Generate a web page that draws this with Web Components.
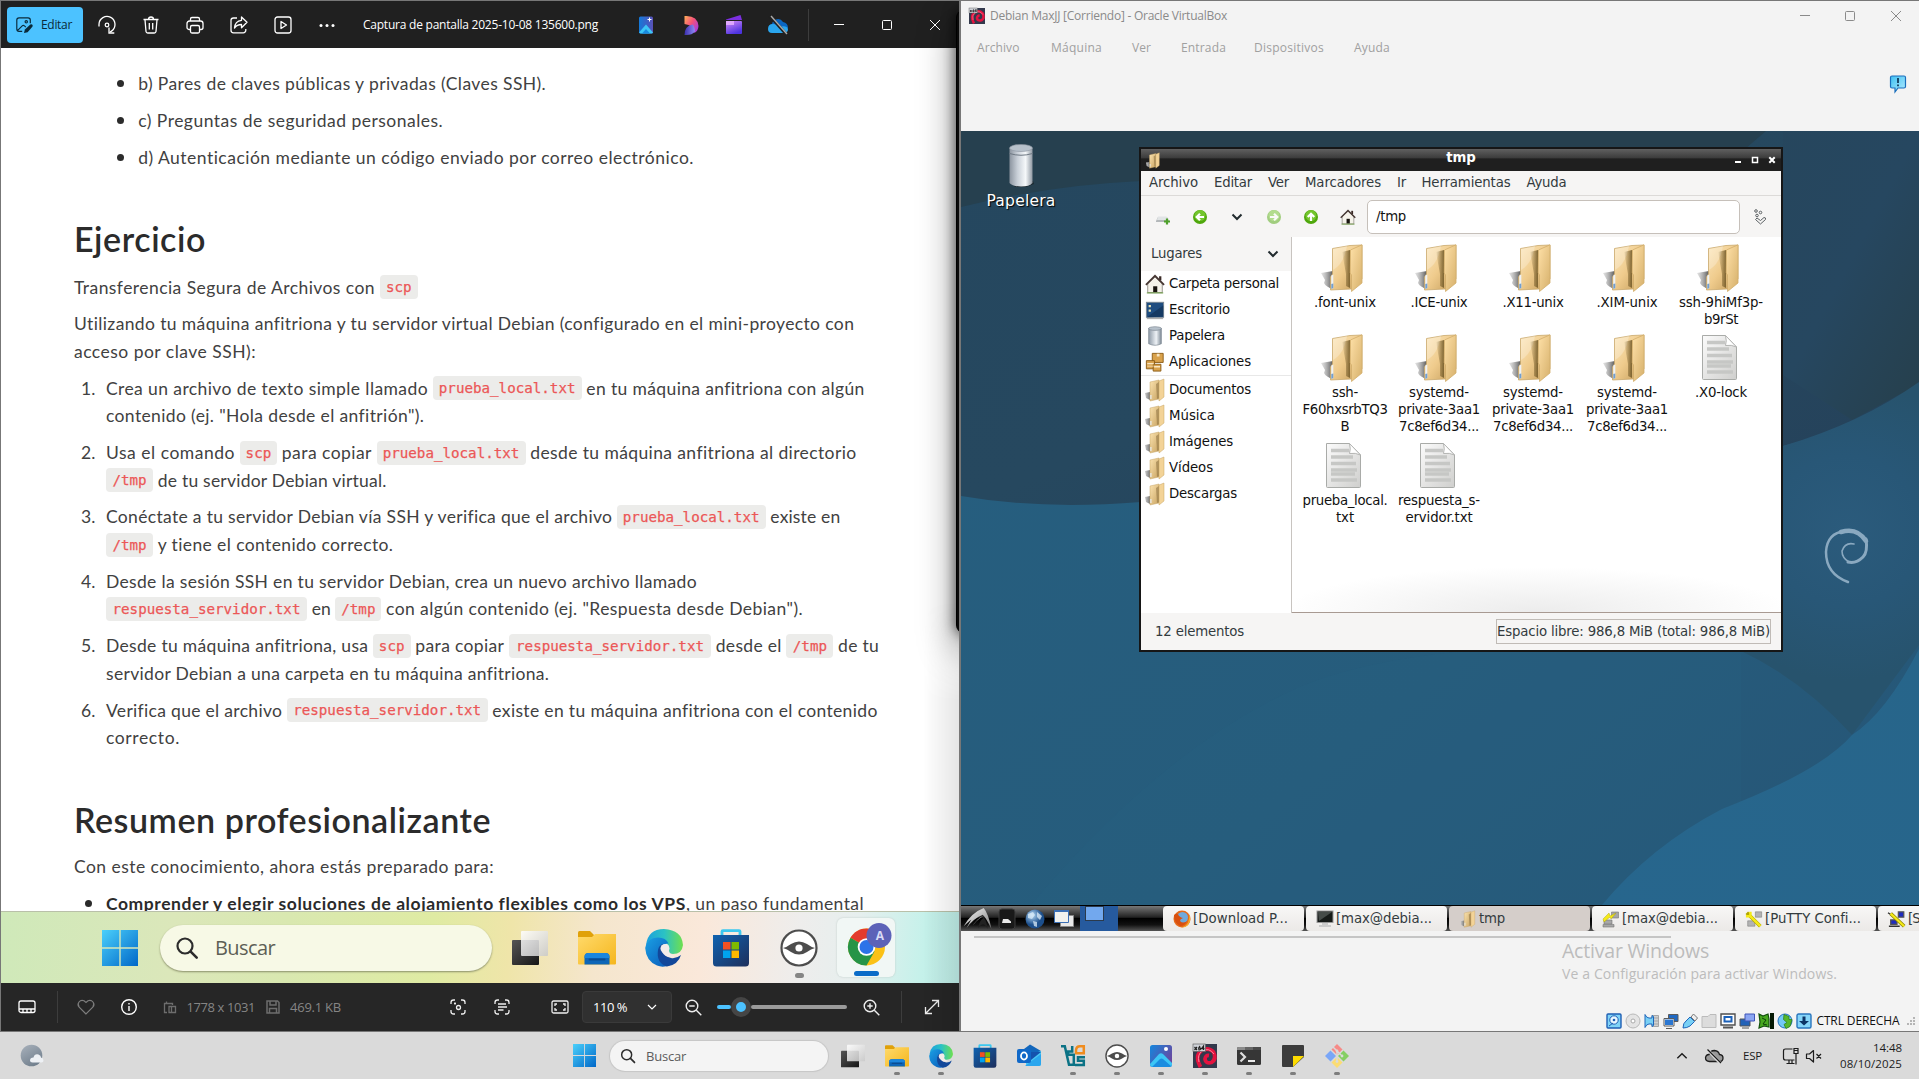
<!DOCTYPE html>
<html lang="es">
<head>
<meta charset="utf-8">
<title>Escritorio</title>
<style>
html,body{margin:0;height:100%;overflow:hidden;background:#dadada;font-family:"Open Sans","Noto Sans",sans-serif}
</style>
</head>
<body>
<desk-top></desk-top>
<script>
const def=(name,html,fn)=>customElements.define(name,class extends HTMLElement{
  constructor(){super();this.attachShadow({mode:'open'});}
  connectedCallback(){if(this.ready)return;this.ready=true;
    const t=document.createElement('template');t.innerHTML=typeof html==='function'?html(this):html;
    this.shadowRoot.append(t.content.cloneNode(true));if(fn)fn(this);}
});

/* A single line of text, tracked so that it fills the width in its "w" attribute */
def('fit-text','<style>:host{display:block;flex:none;white-space:nowrap}span{display:inline-block;white-space:pre}</style><span><slot></slot></span>',el=>{
  const w=+el.getAttribute('w');if(!w)return;
  const s=el.shadowRoot.querySelector('span'),n=el.textContent.length;
  el.style.width=w+'px';
  s.style.letterSpacing=((w-s.getBoundingClientRect().width)/n).toFixed(3)+'px';
});

const winLogo='<defs><linearGradient id="a" x2="1" y2="1"><stop stop-color="#4bd0fb"/><stop offset="1" stop-color="#0067c8"/></linearGradient></defs><path fill="url(#a)" d="M0 0h17.3v17.3H0zM18.7 0H36v17.3H18.7zM0 18.7h17.3V36H0zM18.7 18.7H36V36H18.7z"/>';
const smallFolder='<defs><linearGradient id="a" x2="1" y2="1"><stop stop-color="#fbe3b0"/><stop offset="1" stop-color="#c9a461"/></linearGradient><linearGradient id="s" x2="1"><stop stop-color="#ccc"/><stop offset="1" stop-color="#777"/></linearGradient></defs><path fill="url(#s)" d="M0 15l5-1v8l-4-2z"/><path fill="url(#a)" stroke="#c6a566" stroke-width=".5" d="M5 4l9-2v19l-9 2z"/><path fill="#8b7040" opacity=".55" d="M11 6l3-2v16l-2 1z"/><path fill="#f3d397" stroke="#c6a566" stroke-width=".5" d="M14 3l5-2v18l-5 4z"/><path fill="#e8eef4" d="M5.300 17h1.200v4H5.300z"/>';
const circ=(d,o)=>`<g opacity="${o}"><circle cx="8" cy="8" r="7" fill="#4fa70c"/><circle cx="8" cy="6.500" r="5.500" fill="#73c52c"/><path d="${d}" fill="none" stroke="#fff" stroke-width="2.200"/></g>`;
const ICONS={
 win:['0 0 36 36',winLogo],
 edit:['0 0 20 20','<g fill="none" stroke="#0a2a3a" stroke-width="1.300"><path d="M8 17H4.500A2.500 2.500 0 0 1 2 14.500v-10A2.500 2.500 0 0 1 4.500 2h10A2.500 2.500 0 0 1 17 4.500V8M3 16l5-5q1.200-1 2.500 0l1.500 1.300"/><circle cx="12.500" cy="6.500" r="1.300"/></g><path fill="#0a2a3a" d="M10 19l1-4 6-5.500q1.500-.8 2.300.2t0 2.300L14 18z"/>'],
 rotate:['0 0 20 20','<g fill="none" stroke="#fff" stroke-width="1.300"><path d="M2 11.500V9.500a8 8 0 1 1 12.500 6.600l-1.500 1"/><path d="M12 12.500v5.500h5.300"/><circle cx="10" cy="10" r="1.800"/></g>'],
 trash:['0 0 20 20','<path fill="none" stroke="#fff" stroke-width="1.300" d="M2.500 4.500h15M7.500 4.300Q7.500 2 10 2t2.500 2.300M4 4.700l1 11.800q.2 1.500 1.700 1.500h6.600q1.500 0 1.700-1.500l1-11.800M8.300 8v6.500M11.700 8v6.500"/>'],
 print:['0 0 20 20','<path fill="none" stroke="#fff" stroke-width="1.300" d="M5.500 14.500H4A2 2 0 0 1 2 12.500V8.500A2.500 2.500 0 0 1 4.500 6h11A2.500 2.500 0 0 1 18 8.500v4a2 2 0 0 1-2 2h-1.500M5.500 6V4A1.500 1.500 0 0 1 7 2.500h6A1.500 1.500 0 0 1 14.500 4v2M7 10.500h6a1.500 1.500 0 0 1 1.500 1.500v4.500A1.500 1.500 0 0 1 13 18H7a1.500 1.500 0 0 1-1.500-1.500V12A1.500 1.500 0 0 1 7 10.500z"/>'],
 share:['0 0 20 20','<path fill="none" stroke="#fff" stroke-width="1.300" stroke-linejoin="round" d="M8 3H4.500A2.500 2.500 0 0 0 2 5.500v9.800a2.500 2.500 0 0 0 2.500 2.500h9.800a2.500 2.500 0 0 0 2.500-2.500V14M12.500 2v3.300Q6 6 5.500 13q2.500-3.500 7-3.500v3.300L18 7.300z"/>'],
 play:['0 0 20 20','<g fill="none" stroke="#fff" stroke-width="1.300" stroke-linejoin="round"><rect x="2" y="2" width="16" height="16" rx="2.500"/><path d="M8 6.500v7l5.500-3.500z"/></g>'],
 dots:['0 0 20 20','<g fill="#fff"><circle cx="4" cy="10.500" r="1.500"/><circle cx="10" cy="10.500" r="1.500"/><circle cx="16" cy="10.500" r="1.500"/></g>'],
 pinkphoto:['0 0 20 20','<defs><linearGradient id="a" x2="1"><stop stop-color="#1479d8"/><stop offset="1" stop-color="#5a51b8"/></linearGradient></defs><rect x="3" y="1.500" width="14" height="17" rx="1.500" fill="url(#a)"/><path fill="#3cc6f6" d="M3 17.500l7-8 7 8q-.5 1-1.500 1h-11z"/><path fill="#1889e0" d="M6 18.500l4-4.500 4 4.500z"/><path stroke="#fff" d="M13.500 2.500v4M11.500 4.500h4"/>'],
 designer:['0 0 20 20','<defs><linearGradient id="a" x2="1" y2=".8"><stop stop-color="#ffb057"/><stop offset=".5" stop-color="#f4517a"/><stop offset="1" stop-color="#a03ce8"/></linearGradient><linearGradient id="b" x2="1"><stop stop-color="#3a2fae"/><stop offset="1" stop-color="#8f8af5"/></linearGradient></defs><path fill="url(#a)" d="M3.500 1q13-1 14 10-.3 5-4 7-1-8-10-9z"/><path fill="url(#b)" d="M3.500 20q0-9 8-10.500 2 1 2.500 7-3 4-10.500 3.500z"/>'],
 clip:['0 0 20 20','<defs><linearGradient id="a" y2="1" x2=".5"><stop stop-color="#d78af8"/><stop offset="1" stop-color="#4d34e0"/></linearGradient></defs><path fill="#7c2fe0" d="M2 4.500L16.500 0l1.500 5H2z"/><rect x="2" y="6" width="16" height="13" rx="1" fill="url(#a)"/><path fill="#e7b4ff" opacity=".8" d="M2 6h8v4H2z"/>'],
 cloudoff:['0 0 22 20','<path fill="#0a66c2" d="M5 9a6 6 0 0 1 11-2q5 1 5 6H2q0-3 3-4z"/><path fill="#2aa6ee" d="M1 14q0-5 5-5 4 0 6 3 8-2 9 2 0 4-4 4H5q-4 0-4-4z"/><path stroke="#202020" stroke-width="3" d="M3 1l16 18"/><path stroke="#aaa" stroke-width="1.400" d="M4 1l16 18"/>'],
 min:['0 0 12 12','<path stroke="currentColor" d="M1 5.500h10"/>'],
 max:['0 0 12 12','<rect x="1.500" y="1.500" width="9" height="9" rx="1" fill="none" stroke="currentColor"/>'],
 close:['0 0 12 12','<path stroke="currentColor" d="M1 1l10 10M11 1L1 11"/>'],
 search:['0 0 24 24','<circle cx="10" cy="10" r="7.500" fill="none" stroke="#2c2c2c" stroke-width="2.200"/><path stroke="#2c2c2c" stroke-width="2.600" stroke-linecap="round" d="M15.700 15.700l6 6"/>'],
 taskview:['0 0 36 36','<defs><linearGradient id="a" x2="1" y2="1"><stop stop-color="#fff"/><stop offset="1" stop-color="#c9c9c9"/></linearGradient><linearGradient id="b" x2="1" y2="1"><stop stop-color="#555"/><stop offset="1" stop-color="#161616"/></linearGradient></defs><rect x="0" y="10" width="27" height="25" rx="1" fill="url(#b)"/><rect x="9" y="1" width="27" height="25" rx="1" fill="url(#a)" opacity=".87"/>'],
 folder:['0 0 38 38','<defs><linearGradient id="a" x2="1" y2="1"><stop stop-color="#ffda6b"/><stop offset="1" stop-color="#f5b61d"/></linearGradient></defs><path fill="#e0a10a" d="M0 3.500Q0 2 1.500 2H12l4 4v6H0z"/><path fill="url(#a)" d="M0 8h14l3-3h21v29.500q0 1-1 1H1q-1 0-1-1z"/><path fill="#0d66b8" d="M6.500 35.500V28q0-4 4-4h17q4 0 4 4v7.500z"/><path fill="#1b86dd" d="M6.500 28q0-4 4-4h17q4 0 4 4v1h-25z"/><path stroke="#0a4c92" stroke-width="2" stroke-linecap="round" d="M11.500 30.500h15"/>'],
 edge:['0 0 38 38','<defs><linearGradient id="a" x2="1"><stop stop-color="#1ba0de"/><stop offset=".5" stop-color="#2bc2c4"/><stop offset="1" stop-color="#6fe04e"/></linearGradient><linearGradient id="b" y2="1"><stop stop-color="#1aa0e4"/><stop offset="1" stop-color="#0a59b8"/></linearGradient></defs><path fill="url(#a)" d="M1 16Q3 0 19 0q18 1 19 16-1 9-10 9-6-.5-4-4 1-7-7-8Q6 12 1 16z"/><path fill="url(#b)" d="M.2 19Q2 9 13 8.500q8 0 10.500 6Q19 14 18 19q0 9 7 17Q18 39 12 36.500 1 32 .2 19z"/><path fill="#12479a" d="M13 21q1-5 5-6-2 12 8 14 5 1 10-3-3 10-14 11.500Q11 34 13 21z"/><circle cx="20" cy="19.500" r="4.500" fill="#f3ecea"/><path fill="#f3ecea" d="M17 23q4 7 13 4-5-1-6-5z"/>'],
 store:['0 0 38 38','<defs><linearGradient id="a" y2="1"><stop stop-color="#0f62b0"/><stop offset="1" stop-color="#1e2f5c"/></linearGradient></defs><path fill="none" stroke="#3cc8ef" stroke-width="2.800" d="M10 8V2.500Q10 1.600 11 1.600h16q1 0 1 .9V8"/><path fill="url(#a)" d="M1 6h36v28q0 3.500-3.500 3.500h-29Q1 37.500 1 34z"/><path fill="#f25022" d="M11 13h7.500v7.500H11z"/><path fill="#7fba00" d="M19.500 13H27v7.500h-7.500z"/><path fill="#00a4ef" d="M11 21.500h7.500V29H11z"/><path fill="#ffb900" d="M19.500 21.500H27V29h-7.500z"/>'],
 eye:['0 0 38 38','<circle cx="19" cy="19" r="17.500" fill="#fff" stroke="#4d4d4d" stroke-width="2.200"/><path fill="#4d4d4d" d="M3 19q4-1 8-4 8-5 16 0 4 3 8 4-4 1-8 4-8 5-16 0-4-3-8-4z"/><circle cx="19" cy="19" r="3.600" fill="#fff"/>'],
 chrome:['0 0 50 50','<g transform="translate(2.500 -2)"><circle cx="22" cy="31" r="18.500" fill="#fbc116"/><path fill="#e33b2e" d="M22 31L6 21.700A18.500 18.500 0 0 1 38 21.700z"/><path fill="#269447" d="M22 31l-16-9.300A18.500 18.500 0 0 0 22 49.500l8-14z"/><path fill="#e33b2e" d="M22 22.500h16.500l-3-4-13-5z"/><circle cx="22" cy="31" r="8.800" fill="#fff"/><circle cx="22" cy="31" r="7" fill="#2c73e8"/></g><circle cx="37" cy="17.500" r="12.500" fill="#5c62b8"/>'],
 film:['0 0 20 20','<g fill="none" stroke="#fff" stroke-width="1.300"><rect x="2" y="4" width="16" height="11.500" rx="2"/><path d="M2 12h16M6 12v3.500M10 12v3.500M14 12v3.500"/></g>'],
 heart:['0 0 20 20','<path fill="none" stroke="#7d7d7d" stroke-width="1.200" d="M10 17L3.200 10.200Q1 7.500 3 5t5-1.200l2 1.700 2-1.700Q15 2.500 17 5t-.2 5.200z"/>'],
 info:['0 0 20 20','<g fill="none" stroke="#fff" stroke-width="1.400"><circle cx="10" cy="10" r="7.300"/><path d="M10 9v5M10 6v1.500"/></g>'],
 dims:['0 0 16 16','<g fill="none" stroke="#6d6d6d" stroke-width="1.300"><path d="M5 13.500H2.500v-9h8V6M4.500 4.500V2.500M7 13.500v-6h6.500v6zM9.500 7.500v6"/></g>'],
 save:['0 0 16 16','<path fill="none" stroke="#6d6d6d" stroke-width="1.500" d="M2 2h10.500L14 3.500V14H2zM5 2v4h6V2M4.500 14V9.500h7V14"/>'],
 scan:['0 0 20 20','<g fill="none" stroke="#eee" stroke-width="1.300"><path d="M3 7V5.500Q3 3 5.500 3H7M13 3h1.500Q17 3 17 5.500V7M17 13v1.500q0 2.500-2.500 2.500H13M7 17H5.500Q3 17 3 14.500V13"/><circle cx="10.500" cy="10.500" r="2"/><path d="M6 6.500h2M7 5.500v2"/></g>'],
 scantext:['0 0 20 20','<path fill="none" stroke="#eee" stroke-width="1.300" d="M3 7V5.500Q3 3 5.500 3H7M13 3h1.500Q17 3 17 5.500V7M17 13v1.500q0 2.500-2.500 2.500H13M7 17H5.500Q3 17 3 14.500V13M6 7h8M6 10h9M6 13h5.500"/>'],
 frame:['0 0 20 20','<g fill="none" stroke="#eee" stroke-width="1.300"><rect x="2" y="4" width="16" height="12" rx="1.500"/><path d="M5 9V7h2M13 7h2v2M15 11v2h-2M7 13H5v-2"/></g>'],
 chev:['0 0 12 12','<path fill="none" stroke="currentColor" stroke-width="1.200" d="M2 4l4 4 4-4"/>'],
 chevb:['0 0 12 12','<path fill="none" stroke="#222b2e" stroke-width="2" d="M1.500 3.500L6 8l4.500-4.500"/>'],
 zout:['0 0 20 20','<g fill="none" stroke="#eee" stroke-width="1.400"><circle cx="9" cy="9" r="5.800"/><path d="M13.300 13.300l5 5M6.300 9h5.400"/></g>'],
 zin:['0 0 20 20','<g fill="none" stroke="#eee" stroke-width="1.400"><circle cx="9" cy="9" r="5.800"/><path d="M13.300 13.300l5 5M6.300 9h5.400M9 6.300v5.400"/></g>'],
 expand:['0 0 20 20','<path fill="none" stroke="#eee" stroke-width="1.300" d="M3.500 16.500l13-13M10 3.500h6.500V10M3.500 10v6.500H10"/>'],
 weather:['0 0 24 24','<defs><linearGradient id="a" y2="1" x2=".6"><stop stop-color="#a9b2bc"/><stop offset="1" stop-color="#72808e"/></linearGradient></defs><circle cx="11.500" cy="11.500" r="10.800" fill="url(#a)"/><path fill="#eef1f5" d="M10 16.500q0-3 3.500-3 1-4 5-3 2.500 1 2.500 3 2.500.5 2.500 3 0 2-2 2h-9q-2.500 0-2.500-2z"/>'],
 outlook:['0 0 24 24','<path fill="#1266bb" d="M3 8l10-7.500L24 7v11H8z"/><path fill="#48c6f4" d="M9 12L24 7v13q0 2-2 2H9z"/><path fill="#1452ad" d="M13 8h11l-10 8z"/><path fill="#2aa6ee" d="M8 22l16-12v10q0 2-2 2z"/><rect y="5" width="14" height="14" rx="2" fill="#1068c8"/><ellipse cx="7" cy="12" rx="3" ry="3.600" fill="none" stroke="#fff" stroke-width="1.800"/>'],
 vbox:['0 0 24 24','<g fill="none" stroke="#0b7285" stroke-width="2.500"><path d="M0 2.200h3.800L8 20.800h4.800v-10H7.200V7.500h4V2"/><path d="M24 13.200h-7v3.600h5.800v4.200H14"/><path stroke="#f08c1e" d="M15 9.200V6.500Q15.200 2.300 19 2.300h3.800v6.900H14"/></g>'],
 photos:['0 0 24 24','<defs><linearGradient id="a" x2="1" y2=".6"><stop stop-color="#1387de"/><stop offset="1" stop-color="#6948a0"/></linearGradient></defs><rect x="1" y="1" width="22" height="22" rx="2.500" fill="url(#a)"/><path fill="#3cc6f6" d="M1 20L10 10q2-1.500 4 0l9 9v1.500q0 2.500-2.500 2.500h-17Q1 23 1 20z"/><path fill="#1b8de0" d="M3 23l8-8q1.500-1 3 0l8 7q-.5 1-1.500 1z"/><circle cx="17" cy="5" r="2" fill="#fff"/>'],
 debian:['0 0 24 24','<rect width="24" height="24" fill="#33394c"/><path fill="none" stroke="#e5123f" stroke-width="3.800" d="M7.500 23Q1.500 12 8 7q7-4.500 12.500 1 3.500 7-2 10.500-6 1.500-6.500-3.500.5-4 4-3.500"/><path fill="none" stroke="#ff8ba0" stroke-width=".9" d="M6 18Q4 11 9 7q7-4 12 3"/><rect width="12.500" height="7.500" fill="#cfd2d8" stroke="#555" stroke-width=".6"/><path stroke="#222" stroke-width="1.200" fill="none" d="M1.500 3l2.500 3M4 3L1.500 6M7 2q-2 2-1 4 2 0 1.500-2H6M10.500 6V2L8.500 4.700h3"/>'],
 term:['0 0 24 24','<rect y="3" width="24" height="18" rx="1.500" fill="#363636"/><path fill="#8c8c8c" d="M1.500 3H8v3H0V4.500Q0 3 1.500 3z"/><path fill="#666" d="M8 3h8v3H8z"/><path fill="#4a4a4a" d="M16 3h8v3h-8z"/><path fill="none" stroke="#ddd" stroke-width="2.200" d="M3.500 8.500L8 13l-4.500 4.500"/><path stroke="#fff" stroke-width="1.800" d="M11 17h7"/>'],
 sticky:['0 0 24 24','<path fill="#3c3c3c" d="M2 1h20q1 0 1 1v11L12 23H2q-1 0-1-1V2q0-1 1-1z"/><path fill="#fddb00" d="M12 12h11L12 23z"/>'],
 git:['0 0 24 24','<path fill="#f68a87" d="M12 0l5.500 5.500L12 11 6.500 5.500z"/><path fill="#7aa6f7" d="M5.500 6.500L11 12l-5.500 5.500L0 12z"/><path fill="#85cf63" d="M18.500 6.500L24 12l-5.500 5.500L13 12z"/><path fill="#fbdc74" d="M12 13l5.500 5.500L12 24l-5.500-5.500z"/><path stroke="#dadada" stroke-width="1.500" d="M8 3l8 8M12 7v11"/><circle cx="12" cy="7" r="1.400" fill="#dadada"/><circle cx="12" cy="17.500" r="1.400" fill="#dadada"/><circle cx="17" cy="12" r="1.400" fill="#dadada"/>'],
 cloudx:['0 0 20 16','<path fill="#999" stroke="#1c1c1c" stroke-width="1.300" d="M5.500 13.500q-4 0-4-3.700Q2 6.500 5 6.500q1.500-4 5.500-4 4 .3 5 4 3.500.3 3.500 3.500 0 3.500-3.500 3.500z"/><path stroke="#dadada" stroke-width="3" d="M3 1l13 14"/><path stroke="#1c1c1c" stroke-width="1.300" d="M3.500 1.500L17 15"/>'],
 net:['0 0 18 18','<path fill="none" stroke="#1c1c1c" stroke-width="1.200" d="M10.500 2H3.500Q1.500 2 1.500 4v7q0 2 2 2h9M4.500 16.500h8M7 13v3.500M10 16.500V13M12 1.500h4v5h-4zM14 6.500v11M12.500 3.500h3"/>'],
 mute:['0 0 18 14','<path fill="none" stroke="#1c1c1c" stroke-width="1.200" stroke-linejoin="round" d="M1.500 5v4.500h3l4 3.500V1.500L4.500 5zM11.500 5l4.500 4.500M16 5l-4.500 4.500"/>'],
 note:['0 0 18 18','<defs><linearGradient id="a" x2="1" y2="1"><stop stop-color="#3ec0f2"/><stop offset="1" stop-color="#b4ecff"/></linearGradient></defs><path fill="url(#a)" stroke="#1b6fbd" stroke-width="1.200" d="M3 1h12q1.500 0 1.500 1.500v9Q16.500 13 15 13H9l-3 4v-4H3q-1.500 0-1.500-1.500v-9Q1.500 1 3 1z"/><path stroke="#123a5c" stroke-width="1.800" d="M9 3v5M9 9.500v1.700"/>'],
 bin:['0 0 24 44','<defs><linearGradient id="a" x2="1"><stop stop-color="#8b949f"/><stop offset=".35" stop-color="#c9d0d8"/><stop offset=".7" stop-color="#f5f8fa"/><stop offset="1" stop-color="#8f98a2"/></linearGradient></defs><path fill="#111" opacity=".5" d="M2 37h22l1 3-8 3H6z"/><path fill="url(#a)" d="M.5 4v35q3 3.500 11.500 3.500T23.500 39V4z"/><path fill="none" stroke="#6e7883" d="M.5 9.500Q12 13 23.500 9.500"/><ellipse cx="12" cy="4" rx="11.500" ry="3.500" fill="#b7c1cb" stroke="#8b949f" stroke-width=".6"/>'],
 bigfolder:['0 0 48 48','<defs><linearGradient id="a" x2="1" y2="1"><stop stop-color="#fde8bd"/><stop offset=".5" stop-color="#efcb8c"/><stop offset="1" stop-color="#c19a58"/></linearGradient><linearGradient id="b" y2="1"><stop stop-color="#ffe1a8"/><stop offset="1" stop-color="#d6b06b"/></linearGradient><linearGradient id="s" x2="1"><stop stop-color="#bbb" stop-opacity=".4"/><stop offset="1" stop-color="#555"/></linearGradient><linearGradient id="d" x2="1"><stop stop-color="#6d5524" stop-opacity="0"/><stop offset="1" stop-color="#6d5524" stop-opacity=".85"/></linearGradient></defs><path fill="url(#s)" d="M0 29l12-2v18q-7-2-9-6l1-3z"/><path fill="url(#a)" stroke="#c9a86c" stroke-width=".8" d="M11.500 4.500L29 1.500 41 1v34L30 45l-20.500 1V33l2-3z"/><path fill="#fff" opacity=".25" d="M12 5l14-3q-3 18-14 24z"/><path fill="url(#d)" d="M21 8l8-2v38l-4-2V30z"/><path fill="url(#b)" stroke="#d2ad6b" stroke-width=".8" d="M29.500 6L41 .8V39l-10.500 8.500V31l-1.300-2z"/><path fill="#eef2f6" d="M10.300 31.500l2-1V44l-2 1z"/><path fill="#729fcf" d="M10.300 40l2-.5V44l-2 1z"/>'],
 doc:['0 0 48 48','<defs><linearGradient id="a" y2="1"><stop stop-color="#fbfbfb"/><stop offset="1" stop-color="#cfcfcd"/></linearGradient></defs><path fill="url(#a)" stroke="#a9aba8" d="M5.500 1.500h23L39.500 13v31.500q0 1-1 1h-32q-1 0-1-1z"/><g stroke="#c6c7c5" stroke-width="3.600"><path d="M10 8.500h18M10 15h22M10 21.500h25M10 28h26M10 32h24M10 38h26"/></g><path fill="#fff" stroke="#b4b5b3" d="M28.500 1.500Q30 7 28.500 11.500q6-1 11 1.500z"/>'],
 sf:['0 0 20 24',smallFolder],
 house:['0 0 22 22','<path fill="#3b2a26" d="M15.500 2.500h2.500V7h-2.500z"/><path fill="#f5f2ea" stroke="#77736b" stroke-width=".8" d="M3 10.500L11 3l8 7.500V20.500H3z"/><path fill="none" stroke="#463733" stroke-width="2" d="M1 12L11 2l10 10"/><path fill="#18130f" d="M9 13.500h4.500V20H9z"/><path stroke="#6e9c47" stroke-width="1.200" d="M2 20.800h18"/>'],
 desk:['0 0 22 22','<rect x="1.500" y="2.500" width="19" height="16.500" fill="#1f4d80" stroke="#7c8791"/><path fill="#163a63" d="M2 19L20 6v12.500z"/><path fill="#e9e3b8" d="M4 5.500h2.500V8H4zM4 10.500h2.500V13H4z"/><path stroke="#999" d="M2 20.500h18"/>'],
 sbin:['0 0 22 22','<defs><linearGradient id="a" x2="1"><stop stop-color="#8d99a6"/><stop offset=".6" stop-color="#eef2f6"/><stop offset="1" stop-color="#7e8a96"/></linearGradient></defs><path fill="url(#a)" stroke="#76828d" stroke-width=".7" d="M4 2.500v17q7 3.500 14 0v-17z"/><ellipse cx="11" cy="2.800" rx="7" ry="2" fill="#b7c1cb" stroke="#76828d" stroke-width=".7"/>'],
 apps:['0 0 22 22','<g fill="#d9a24c" stroke="#8a5a14"><path d="M8 1.500h12v10H8z"/><path d="M1.500 9.500h9v9h-9z"/><path d="M9 13.500h8.500v7.500H9z"/></g><path fill="#f8e6c4" d="M13 2h3v3h-3zM2.500 12h7v1.500h-7zM10 15.500h6.500V17H10zM2.500 15h7v1h-7z"/>'],
 newtab:['0 0 16 16','<path fill="#b4b8ba" d="M1 12l2-4h9l2 4-1 1H1z"/><path fill="#e1e4e5" d="M3 7.500h8.500L13 11H2z"/><path stroke="#4ea02a" stroke-width="2.200" d="M12 9.500v6M9 12.500h6"/>'],
 back:['0 0 16 16',circ('M12 8H5M8 4.700L4.700 8 8 11.300',1)],
 fwd:['0 0 16 16',circ('M4 8h7M8 4.700L11.300 8 8 11.300',.5)],
 up:['0 0 16 16',circ('M8 12V5M4.700 8L8 4.700 11.300 8',1)],
 more:['0 0 16 18','<g fill="none" stroke="#5c6164"><circle cx="4" cy="3" r="1.300"/><circle cx="8.500" cy="4.500" r="1.300"/><circle cx="5" cy="7.500" r="1.300"/><path d="M3.500 11.500l5 4.500 5-4.500V10l-1.500-.5-3.500 3-3.500-2.500z"/></g>'],
 lxde:['0 0 30 24','<defs><linearGradient id="a" y2="1"><stop stop-color="#fff"/><stop offset="1" stop-color="#777"/></linearGradient></defs><path fill="url(#a)" d="M0 20Q8 6 21 1q5 6 8 22Q24 12 20 8 10 12 3 22l5-9zM8 22Q12 14 21 9q-8 3-13 13z"/><path fill="#222" d="M15 22q1-7 6-11 3 3 4 12-4-9-10-1z"/>'],
 fm:['0 0 18 22','<rect x="1" y="1" width="16" height="20" rx="3" fill="#191919" stroke="#3c3c3c"/><path fill="#e9e9e9" d="M4 15l1-4h5l3 2.500V15z"/>'],
 globe:['0 0 20 20','<defs><radialGradient id="a" cx=".35" cy=".3"><stop stop-color="#b8dcf8"/><stop offset="1" stop-color="#1c4f8c"/></radialGradient></defs><circle cx="10" cy="10" r="9.500" fill="url(#a)"/><path fill="#dcecf8" opacity=".75" d="M3 5l5-2 2 3-3 4-4-1zM12 3l5 4-2 4-3-3zM8 12l4 1v5l-3-1z"/>'],
 iconify:['0 0 22 20','<path fill="#e8e8e8" stroke="#888" d="M7.500 6.500h13v11h-13z"/><path fill="#f1f1ee" stroke="#3b6fb5" d="M1.500 1.500h14v12h-14z"/><path stroke="#3b6fb5" stroke-width="2" d="M1 2h15"/>'],
 firefox:['0 0 18 18','<circle cx="9" cy="9" r="8.500" fill="#e66a1b"/><circle cx="9.500" cy="7.500" r="5.500" fill="#6fa9dc"/><path fill="#d9500f" d="M1 5q2-2 4-1 1 3 5 4-3 1-3 3 3 3 7 0-2 5-7 5-6-3-6-11z"/><path fill="#f5ad2c" d="M16 4q3 6-1 11-3 3-7 2.500 5-1 7-5 2-4 1-8.500z"/>'],
 monitor:['0 0 18 18','<rect x="1" y="1" width="16" height="11.500" fill="#161a18" stroke="#999"/><path fill="#454b48" d="M2 2h14L3 11z"/><path fill="#ccc" d="M6 13h6v2h3v2H3v-2h3z"/>'],
 putty:['0 0 18 18','<g fill="#a7a7a7" stroke="#777" stroke-width=".6"><path d="M9.500 2h7v6h-7z"/><path d="M2 10h8v4H2zM1 14.500h11V17H1z"/></g><path fill="#f5ea18" stroke="#a59a00" stroke-width=".4" d="M1 9l6-6 1 3 6-3-5 6-1-2-6 5z"/>'],
 puttyc:['0 0 20 18','<g fill="#b3b3b3" stroke="#777" stroke-width=".6"><path d="M11.500 1h7v6h-7z"/><path d="M3 11h8v6H3z"/></g><path fill="none" stroke="#b3a700" stroke-width="4" d="M2 2l5 5 10 10"/><path fill="none" stroke="#f5ea18" stroke-width="2.800" d="M1 6h5V1M5 5l12 12"/>'],
 puttys:['0 0 20 18','<g fill="#1e2bc0" stroke="#555" stroke-width="1.400"><path d="M11.500 1h6v6h-6z"/><path d="M3 10h7v5H3z"/></g><path stroke="#333" stroke-width="1.500" d="M1 17h12M0 2l9 6"/><path stroke="#8b8200" stroke-width="4" d="M3 3l15 14"/><path stroke="#f5ea18" stroke-width="2.400" d="M3 3l15 14"/>'],
 v0:['0 0 16 16','<rect x="1" y="1" width="14" height="14" rx="1" fill="#7fd3f7" stroke="#1f5fb4" stroke-width="1.400"/><circle cx="8" cy="7" r="4.200" fill="#e9f7ff" stroke="#1f5fb4"/><circle cx="8" cy="7" r="1.300" fill="#1f5fb4"/><path stroke="#1f5fb4" d="M3 13l4-3"/>'],
 v1:['0 0 16 16','<circle cx="8" cy="8" r="7" fill="#e4e4e4" stroke="#b9b9b9"/><circle cx="8" cy="8" r="2" fill="#fff" stroke="#aaa"/>'],
 v2:['0 0 16 16','<path fill="#d0d0d0" stroke="#a5a5a5" d="M8 2.500h6.500v11H8z"/><path stroke="#a5a5a5" d="M10 5h4M10 8h4M10 11h4"/><path fill="#79d0f5" stroke="#1e66bb" d="M1 1.500q1.500 3.500 4 3.500h3V2.500l1.500 1v9l-1.500 1V11H5q-2.500 0-4 3.500z"/>'],
 v3:['0 0 16 16','<path fill="#1f68c2" stroke="#5b5b5b" d="M5.500 1.500h9.500v7H5.500z"/><path fill="#2b77d2" stroke="#fff" d="M1.500 6h9v6.500h-9z"/><path fill="none" stroke="#5b5b5b" d="M1 5.500h10V13H1zM3 15.500h6"/>'],
 v4:['0 0 16 16','<path fill="#79d0f5" stroke="#1e66bb" d="M1 15q0-5 3-7l4-4 4.500 4.500L8 13q-3 2-7 2z"/><path fill="#eee" stroke="#777" d="M9 4l2.500-3L15.500 5 13 8z"/>'],
 v5:['0 0 16 16','<path fill="#dcdcdc" stroke="#bbb" d="M1 3.500h6l2-2h6v13H1z"/>'],
 v6:['0 0 16 16','<path fill="#fff" stroke="#4f4f4f" stroke-width="1.400" d="M1 1h14v11H1z"/><path fill="#fff" stroke="#1d62ba" stroke-width="2" d="M4.500 4h7v4.500h-7z"/><path stroke="#555" stroke-width="2" d="M3 14.500h10"/>'],
 v7:['0 0 16 16','<path fill="#2262b7" stroke="#555" d="M1 6h10v7H1z"/><path fill="#8aa5f2" stroke="#3f55b8" d="M6 1h9.500v7H6z"/><path stroke="#555" d="M3 15h7"/>'],
 v8:['0 0 16 16','<path fill="#47a81f" stroke="#12500c" stroke-width="1.200" d="M1 1l4 2 5-2 1 5v8l-5-1-5 2 1-6z"/><path fill="none" stroke="#0c3f08" d="M4 5l4 2-3 4 4 1"/><path fill="#061a04" d="M12 0h4v16h-4z"/>'],
 v9:['0 0 16 16','<circle cx="8" cy="8" r="7" fill="#73c9f4" stroke="#2172bd"/><path fill="#55b72c" stroke="#2b7d12" stroke-width=".7" d="M7 1.500l5 2v3h3l-2 7-4 2-2-4 3-2-3.500-3z"/>'],
 v10:['0 0 16 16','<rect x="1" y="1" width="14" height="14" rx="1.500" fill="#86d6fa" stroke="#2a75bd" stroke-width="1.400"/><path fill="#0d3566" d="M6.500 3.500h3V8H13l-5 4.500L3 8h3.500z"/>'],
 grip:['0 0 10 10','<g fill="#b5b5b5"><path d="M7 1h2v2H7zM4 4h2v2H4zM7 4h2v2H7zM1 7h2v2H1zM4 7h2v2H4zM7 7h2v2H7z"/></g>'],
 fmin:['0 0 8 8','<path stroke="#fff" stroke-width="2" d="M1 6h6"/>'],
 fmax:['0 0 8 8','<path stroke="#fff" stroke-width="1.500" fill="none" d="M1.500 1.500h5v5h-5z"/>'],
 fclose:['0 0 8 8','<path stroke="#fff" stroke-width="2" d="M1.300 1.300l5.400 5.400M6.700 1.300L1.300 6.700"/>']
};
def('i-con',el=>{const [vb,b]=ICONS[el.getAttribute('n')],w=el.getAttribute('w')||20,h=el.getAttribute('h')||w;
 return `<style>:host{display:block;flex:none;width:${w}px;height:${h}px}svg{display:block;overflow:visible}</style><svg width="${w}" height="${h}" viewBox="${vb}">${b}</svg>`});
const ic=(n,w,ml=0,h='')=>`<i-con n="${n}" w="${w}" ${h?`h="${h}"`:''} style="margin-left:${ml}px"></i-con>`;
const tx=(s,w,ml=0,st='')=>`<fit-text w="${w}" style="margin-left:${ml}px;${st}">${s}</fit-text>`;

/* Inline code */
def('code-chip','<style>:host{display:flex;flex:none;align-items:center;justify-content:center;height:24px;border-radius:4px;background:#ececea;color:#eb5757;font:14.2px/24px "DejaVu Sans Mono",monospace;-webkit-text-stroke:.25px #eb5757;white-space:nowrap}</style><slot></slot>',el=>{el.style.width=el.getAttribute('w')+'px'});
const cc=(s,w)=>`<code-chip w="${w}">${s}</code-chip>`;
/* One document line: marker, then text runs and chips */
def('doc-line','<style>:host{display:flex;align-items:center;height:27.500px;gap:4.700px}</style><slot></slot>');
const ln=(x,mt,c,st='')=>`<doc-line style="padding-left:${x-1}px;margin-top:${mt}px;${st}">${c}</doc-line>`;
const li=(n,mt,c)=>ln(81,mt,`<span style="flex:none;width:20.300px">${n}.</span>`+c);
const bul='<span style="flex:none;width:7px;height:7px;border-radius:50%;background:#2b2b2b;margin-right:10px"></span>';

def('doc-page',`<style>:host{display:block;height:863px;overflow:hidden;background:#fff;color:#414141;font:400 17.500px/27.500px Lato,sans-serif}
h2{margin:0;padding-left:73px;display:flex;height:44px;line-height:44px;font-size:34px;font-weight:600;color:#2b2b2b}b{color:#2b2b2b}</style>
${ln(116.5,22,bul+tx('b) Pares de claves públicas y privadas (Claves SSH).',408))}
${ln(116.5,9.4,bul+tx('c) Preguntas de seguridad personales.',305))}
${ln(116.5,9.4,bul+tx('d) Autenticación mediante un código enviado por correo electrónico.',556))}
<h2 style="margin-top:46px">${tx('Ejercicio',132)}</h2>
${ln(74,12.4,tx('Transferencia Segura de Archivos con',301)+cc('scp',38))}
${ln(74,9,tx('Utilizando tu máquina anfitriona y tu servidor virtual Debian (configurado en el mini-proyecto con',780))}
${ln(74,0.2,tx('acceso por clave SSH):',182))}
${li(1,9.3,tx('Crea un archivo de texto simple llamado',322)+cc('prueba_local.txt',149)+tx('en tu máquina anfitriona con algún',278))}
${ln(106,0,tx('contenido (ej. "Hola desde el anfitrión").',318))}
${li(2,9.4,tx('Usa el comando',129)+cc('scp',37.5)+tx('para copiar',90)+cc('prueba_local.txt',149)+tx('desde tu máquina anfitriona al directorio',326))}
${ln(106,0,cc('/tmp',47)+tx('de tu servidor Debian virtual.',229))}
${li(3,9.4,tx('Conéctate a tu servidor Debian vía SSH y verifica que el archivo',506)+cc('prueba_local.txt',149)+tx('existe en',70))}
${ln(106,0,cc('/tmp',47)+tx('y tiene el contenido correcto.',236))}
${li(4,9.4,tx('Desde la sesión SSH en tu servidor Debian, crea un nuevo archivo llamado',591))}
${ln(106,0,cc('respuesta_servidor.txt',201)+tx('en',19)+cc('/tmp',46)+tx('con algún contenido (ej. "Respuesta desde Debian").',417))}
${li(5,9.4,tx('Desde tu máquina anfitriona, usa',262)+cc('scp',38)+tx('para copiar',89)+cc('respuesta_servidor.txt',202)+tx('desde el',66)+cc('/tmp',47)+tx('de tu',41))}
${ln(106,0,tx('servidor Debian a una carpeta en tu máquina anfitriona.',443))}
${li(6,9.4,tx('Verifica que el archivo',176)+cc('respuesta_servidor.txt',201)+tx('existe en tu máquina anfitriona con el contenido',385))}
${ln(106,0,tx('correcto.',74))}
<h2 style="margin-top:46px">${tx('Resumen profesionalizante',417)}</h2>
${ln(74,11.500,tx('Con este conocimiento, ahora estás preparado para:',420))}
${ln(85,9.3,bul.replace('10px','9.3px')+`<b>${tx('Comprender y elegir soluciones de alojamiento flexibles como los VPS',580)}</b>`+tx(', un paso fundamental',178,-4.7))}`);

def('photo-strip',`<style>:host{display:flex;align-items:center;height:72px;box-sizing:border-box;border-top:1px solid #b9c0a9;background:linear-gradient(95deg,#cfe9b9 0,#dbe7ba 18%,#d9e8b0 30%,#dfeba3 45%,#efe5a9 53%,#f5e6cd 62%,#fae8da 73%,#eeedec 83%,#e6efee 89%,#c5f1ea 96%,#c0efe9)}
.s{display:flex;align-items:center;width:332px;height:46px;border-radius:23px;background:#f7f9e6;box-shadow:0 1px 2px #8a8f6a;margin-left:22px;flex:none}
.c{width:58px;height:59px;border-radius:6px;background:#f1f7f5;margin-left:19px;display:flex;flex-direction:column;align-items:center;position:relative;box-shadow:0 0 2px #bcc8c5}
.c i,.e i{display:block;height:5px;border-radius:3px}.c b{position:absolute;left:35px;top:9px;width:16px;text-align:center;font:bold 12px/17px "Open Sans",sans-serif;color:#d9dbf5}
.e{display:flex;flex-direction:column;align-items:center;gap:6px;padding-top:11px}</style>
${ic('win',36,101)}<div class="s">${ic('search',24,15)}${tx('Buscar',60,16,'font:20px/30px Open Sans,sans-serif;color:#5d5f55')}</div>
${ic('taskview',36,20)}${ic('folder',38,30)}${ic('edge',38,29)}${ic('store',38,29)}<div class="e" style="margin-left:30px">${ic('eye',38)}<i style="width:9px;background:#858585"></i></div>
<div class="c">${ic('chrome',50,2)}<b>A</b><i style="width:25px;background:#0a6cc8;margin-top:3px"></i></div>`);

const sep=(m=20)=>`<span style="flex:none;width:1px;height:32px;background:#3d3d3d;margin-left:${m}px"></span>`;
def('photo-viewer',`<style>:host{display:block;position:relative;overflow:hidden;width:961px;height:1032px;box-sizing:border-box;border:1px solid #777;border-right:2px solid #777;background:#202020}
.t,.b{display:flex;align-items:center;height:47px;color:#fff;font-size:12px}.b{height:48px;background:#262626}
.ed{display:flex;align-items:center;width:76px;height:36px;border-radius:4px;background:#4cc2ff;color:#0a2a3a;margin-left:6px;flex:none}
.sel{display:flex;align-items:center;width:88px;height:30px;border:1px solid #3a3a3a;border-radius:4px;background:#303030;margin-left:12px;flex:none}
.sl{display:flex;align-items:center;width:130px;margin-left:14px;flex:none}.sl i{height:4px;border-radius:2px}
.k{flex:none;width:10px;height:10px;border-radius:50%;background:#4cc2ff;border:5px solid #454545}
.sh{position:absolute;left:955px;top:9px;width:60px;height:623px;border-radius:8px;background:#0a0a0a;border-left:1px solid #000;box-shadow:0 0 12px 2px rgba(0,0,0,.5),0 14px 34px 4px rgba(0,0,0,.35)}
.sh2{position:absolute;left:922px;top:600px;width:37px;height:430px;background:linear-gradient(90deg,transparent,rgba(0,0,0,.1));-webkit-mask:linear-gradient(transparent,#000 100px);mask:linear-gradient(transparent,#000 100px)}</style>
<div class="t"><div class="ed">${ic('edit',18,8)}${tx('Editar',31,8)}</div>${ic('rotate',20,14)}${['trash','print','share','play','dots'].map(n=>ic(n,20,24)).join('')}${tx('Captura de pantalla 2025-10-08 135600.png',235,26)}
${ic('pinkphoto',20,38)}${ic('designer',20,25)}${ic('clip',20,23)}${ic('cloudoff',22,23,20)}${sep(19)}${ic('min',12,24)}${ic('max',12,36)}${ic('close',12,36)}</div>
<doc-page></doc-page><photo-strip></photo-strip>
<div class="b">${ic('film',20,16)}${sep()}${ic('heart',20,18)}${ic('info',20,23)}${ic('dims',16,23)}${tx('1778 x 1031',68.5,8.5,'color:#858585;font-size:13px')}${ic('save',16,10)}${tx('469.1 KB',51,9,'color:#858585;font-size:13px')}
${ic('scan',20,107)}${ic('scantext',20,24)}${ic('frame',20,38)}<div class="sel">${tx('110 %',34,10,'font-size:13px')}${ic('chev',12,19)}</div>${ic('zout',20,11)}
<div class="sl"><i style="width:14px;background:#4cc2ff"></i><span class="k"></span><i style="flex:1;background:#9a9a9a"></i></div>${ic('zin',20,14)}${sep()}${ic('expand',20,20)}</div>
<div class="sh2"></div><div class="sh"></div>`);

/* File manager */
def('file-item',el=>`<style>:host{display:flex;flex-direction:column;align-items:center;width:94px;color:#111;font:13.300px/17px "DejaVu Sans",sans-serif}</style>${ic(el.getAttribute('t'),48,0)}<div style="height:2px"></div>${el.getAttribute('l').split('|').map(s=>{const[a,w]=s.split('~');return tx(a,w||0)}).join('')}`);
const fi=(l,t='bigfolder')=>`<file-item t="${t}" l="${l}"></file-item>`;
def('place-row',el=>`<style>:host{display:flex;align-items:center;height:26px;padding-left:4px;color:#111}</style>${ic(el.getAttribute('i'),20,0,el.getAttribute('i')=='sf'?24:20)}${tx(el.getAttribute('l'),el.getAttribute('w'),4)}`);
const pr=(i,l,w)=>`<place-row i="${i}" l="${l}" w="${w}"></place-row>`;
const sysd='systemd-~60|private-3aa1~82|7c8ef6d34...~80';
def('file-manager',`<style>:host{display:block;box-sizing:border-box;width:644px;height:505px;border:2px solid #161616;background:#f6f5f4;font:13.300px/18px "DejaVu Sans",sans-serif;color:#333b3e}
.tt{display:flex;align-items:center;height:22px;background:linear-gradient(#606060,#3c3c3c 40%,#1f1f1f 45%,#1f1f1f)}
.tt b{flex:1;text-align:center;color:#fff;font-size:13.300px;padding-left:28px;padding-bottom:4px}
.m{display:flex;align-items:center;height:24px;border-bottom:1px solid #dcdad8}
.tb{display:flex;align-items:center;height:41px}
.in{box-sizing:border-box;width:373px;height:34px;border:1px solid #c6c0ba;border-radius:5px;background:#fff;color:#111;display:flex;align-items:center;margin-left:11px}
.mid{display:flex;height:376px}.side{width:150px;background:#fff;border-right:1px solid #c8c4c0}
.lg{display:flex;align-items:center;height:34px;background:#f6f5f4}
.ct{flex:1;background:radial-gradient(ellipse 52% 45px at 50% 100%,#ececec,#fff);border-bottom:1px solid #a89a92;padding:7px 0 0 6px;display:grid;grid-template-columns:repeat(5,94px);grid-template-rows:90px 107.500px 100px;box-sizing:border-box}
.st{display:flex;align-items:center;height:37px}.bx{box-sizing:border-box;width:275px;height:25px;border:1px solid #c0bbb6;display:flex;align-items:center;margin-left:252px}</style>
<div class="tt">${ic('sf',14,5,17)}<b>tmp</b>${ic('fmin',8,0)}${ic('fmax',8,9)}${ic('fclose',8,9)}<span style="width:5px"></span></div>
<div class="m">${tx('Archivo',49,8)}${tx('Editar',38,16)}${tx('Ver',21,16)}${tx('Marcadores',76,16)}${tx('Ir',9,16)}${tx('Herramientas',89,15.5)}${tx('Ayuda',40,16)}</div>
<div class="tb">${ic('newtab',16,14)}${ic('back',16,21)}${ic('chevb',12,23)}${ic('fwd',16,23)}${ic('up',16,21)}${ic('house',16,21)}<div class="in">${tx('/tmp',30,8)}</div>${ic('more',16,12,18)}</div>
<div class="mid"><div class="side"><div class="lg">${tx('Lugares',51,10)}${ic('chevb',12,65)}</div>
${pr('house','Carpeta personal',110)}${pr('desk','Escritorio',61)}${pr('sbin','Papelera',56)}${pr('apps','Aplicaciones',82)}<div style="height:1px;background:#e8e8e8;margin:0 0 1px"></div>
${pr('sf','Documentos',82)}${pr('sf','Música',46)}${pr('sf','Imágenes',64)}${pr('sf','Vídeos',44)}${pr('sf','Descargas',68)}</div>
<div class="ct">${fi('.font-unix~62')}${fi('.ICE-unix~57')}${fi('.X11-unix~61')}${fi('.XIM-unix~61')}${fi('ssh-9hiMf3p-~84|b9rSt~34')}
${fi('ssh-~26|F60hxsrbTQ3~85|B')}${fi(sysd)}${fi(sysd)}${fi(sysd)}${fi('.X0-lock~52','doc')}${fi('prueba_local.~85|txt~18','doc')}${fi('respuesta_s-~82|ervidor.txt~67','doc')}</div></div>
<div class="st">${tx('12 elementos',89,14)}<div class="bx">${tx('Espacio libre: 986,8 MiB (total: 986,8 MiB)',273,0)}</div></div>`);

def('task-button',el=>`<style>:host{display:flex;align-items:center;flex:none;box-sizing:border-box;width:141px;height:25px;border-radius:4px;background:${el.hasAttribute('on')?'#d5ceca':'linear-gradient(#f8f7f6,#ebe9e7)'};font:13.300px/18px "DejaVu Sans",sans-serif;color:#333b3e;margin-right:2px}</style>${ic(el.getAttribute('i'),18,10)}${tx(el.getAttribute('l'),el.getAttribute('w'),2)}`);
const tk=(i,l,w,x='')=>`<task-button i="${i}" l="${l}" w="${w}" ${x}></task-button>`;
def('lx-panel',`<style>:host{display:flex;align-items:center;height:26px;box-sizing:border-box;border-top:1px solid #000;background:linear-gradient(#777,#222 45%,#000 50%,#111 75%,#555);overflow:hidden}
.pg{width:38px;height:25px;background:#265a9e;margin-left:5px;flex:none}.pg i{display:block;width:17px;height:13px;margin-left:5px;background:#72a8ee;border:1px solid #2b3a4c}</style>
${ic('lxde',30,2,23)}${ic('fm',18,5,22)}${ic('globe',20,9)}${ic('iconify',22,8,20)}<div class="pg"><i></i></div><span style="width:45px;flex:none"></span>
${tk('firefox','[Download P...',95)}${tk('monitor','[max@debia...',96)}${tk('sf','tmp',26,'on')}${tk('putty','[max@debia...',96)}${tk('puttyc','[PuTTY Confi...',96)}${tk('puttys','[S',12)}`);

def('debian-desktop',`<style>:host{display:block;position:relative;height:774px;overflow:hidden;background:#265c7d}.w{position:absolute;inset:0;display:block}
file-manager{position:absolute;left:178px;top:16px}.p{position:absolute;left:20px;top:13px;width:80px;display:flex;flex-direction:column;align-items:center;gap:3px;color:#fff;font:15.500px/20px "DejaVu Sans",sans-serif;text-shadow:1px 1px 1px #000}</style>
<svg class="w" width="958" height="774" viewBox="0 0 958 774"><defs>
<linearGradient id="m" y2="1"><stop stop-color="#25475f"/><stop offset=".5" stop-color="#26485f"/><stop offset="1" stop-color="#25415a"/></linearGradient>
<linearGradient id="r" y2="1"><stop stop-color="#26465d"/><stop offset=".5" stop-color="#264760"/><stop offset="1" stop-color="#263f4b"/></linearGradient>
<linearGradient id="b" y2="1"><stop stop-color="#265f80"/><stop offset=".6" stop-color="#265c7c"/><stop offset="1" stop-color="#265576"/></linearGradient>
<radialGradient id="h" gradientUnits="userSpaceOnUse" cx="885" cy="400" r="150"><stop stop-color="#2b5b7c"/><stop offset=".5" stop-color="#285777"/><stop offset="1" stop-color="#27536d"/></radialGradient>
<linearGradient id="l" x1="1" x2="0" y2="1"><stop stop-color="#27658a"/><stop offset="1" stop-color="#27668d"/></linearGradient></defs>
<path fill="url(#b)" d="M0 0h958v774H0z"/><path fill="#2a6a8c" opacity=".12" d="M70 774Q200 620 330 560T780 520V774z"/>
<path fill="url(#m)" d="M0 0h958v254Q900 296 822 315 500 380 180 371 80 379 0 365z"/>
<path fill="#26404f" d="M0 0h805L770 30Q500 60 180 50 90 54 0 76z"/>
<path fill="url(#r)" d="M805 0h153v253l-67 36-69-45V0z"/>
<path fill="url(#h)" d="M958 251Q900 292 822 315 700 360 640 430L780 520q60 28 111 84l67-90z"/>
<path fill="url(#l)" d="M958 518Q925 582 891 604 860 640 761 678 690 715 641 774h317z"/>
<g fill="none" stroke="#8aa9c0" stroke-linecap="round"><path stroke-width="2.500" d="M887 451Q865 443 865 421 866 402 884 400"/><path stroke-width="4.500" d="M880 401Q896 396 905 410"/><path stroke-width="3" d="M905 408Q907 421 902 426 895 433 887 431"/><path stroke-width="1.600" d="M888 431Q881 427 881 420 884 411 893 413"/></g></svg>
<div class="p">${ic('bin',24,0,44)}${tx('Papelera',69)}</div><file-manager></file-manager>`);

def('vm-window',`<style>:host{display:block;box-sizing:border-box;width:958px;height:1032px;border-top:1px solid #777;border-bottom:1px solid #777;background:#f3f3f3;color:#8a8a8a;font-size:12px;line-height:16px}
.t,.m,.n,.s{display:flex;align-items:center}.t{height:29px}.m{height:36px;color:#a0a0a0}.n{height:65px;align-items:flex-start;justify-content:flex-end}
.ln{height:2px;width:697px;background:#c5c5c5;margin:5px 0 0 13px}.a{color:#bcbcbc;margin:0 0 0 601px;height:74px}.s{height:17px}.s i-con+i-con{margin-left:3.100px!important}</style>
<div class="t">${ic('debian',16,8)}${tx('Debian MaxJJ [Corriendo] - Oracle VirtualBox',237,5)}${ic('min',12,572)}${ic('max',12,33)}${ic('close',12,34)}</div>
<div class="m">${tx('Archivo',42.5,16)}${tx('Máquina',51,31.5)}${tx('Ver',19,30)}${tx('Entrada',45,30)}${tx('Dispositivos',70,28)}${tx('Ayuda',36,30)}</div>
<div class="n"><i-con n="note" w="18" style="margin:9px 12px 0 0"></i-con></div>
<debian-desktop></debian-desktop><lx-panel></lx-panel><div class="ln"></div>
<div class="a">${tx('Activar Windows',147,0,'font-size:19.5px;line-height:26px')}${tx('Ve a Configuración para activar Windows.',275,0,'font-size:14px;line-height:19px')}</div>
<div class="s"><span style="width:644.500px"></span>${[0,1,2,3,4,5,6,7,8,9,10].map(i=>ic('v'+i,16)).join('')}${tx('CTRL DERECHA',83,4,'color:#111')}${ic('grip',10,7)}</div>`);

const dotted=(n,d)=>`<div class="i">${ic(n,24)}<i style="background:${d?'#7d7d7d':'transparent'}"></i></div>`;
def('win-taskbar',`<style>:host{display:flex;align-items:center;height:47px;background:#dadada;font-size:12px;color:#1c1c1c}
.s{display:flex;align-items:center;flex:none;width:218px;height:30px;border-radius:15px;background:#f4f4f4;box-shadow:0 0 1px 1px #c6c6c6;margin-left:14px}
.g{display:flex;gap:20px;margin-left:13px}.i{width:24px;display:flex;flex-direction:column;align-items:center;gap:4px;padding-top:7px}.i i{width:6px;height:3px;border-radius:2px}
.c{margin-left:18px;display:flex;flex-direction:column;align-items:flex-end;width:62px}</style>
${ic('weather',24,20)}${ic('win',23,529)}<div class="s">${ic('search',16,10)}${tx('Buscar',40,10,'font-size:13px;color:#5c5c5c')}</div>
<div class="g">${[['taskview'],['folder',1],['edge',1],['store'],['outlook'],['vbox',1],['eye',1],['photos',1],['debian',1],['term',1],['sticky',1],['git',1]].map(a=>dotted(...a)).join('')}</div>
<i-con n="chev" w="14" style="margin-left:326px;transform:rotate(180deg)"></i-con>${ic('cloudx',20,15,16)}${tx('ESP',19,19,'font-size:11.5px')}${ic('net',18,20)}${ic('mute',18,5,14)}
<div class="c" style="margin-left:17px">${tx('14:48',29,0,'font-size:11.5px;line-height:16px')}${tx('08/10/2025',62,0,'font-size:11.5px;line-height:16px')}</div>`);

def('desk-top','<style>:host{display:flex;flex-direction:column;width:1919px;height:1079px;overflow:hidden}.r{display:flex}</style><div class="r"><photo-viewer></photo-viewer><vm-window></vm-window></div><win-taskbar></win-taskbar>');
</script>
</body>
</html>
